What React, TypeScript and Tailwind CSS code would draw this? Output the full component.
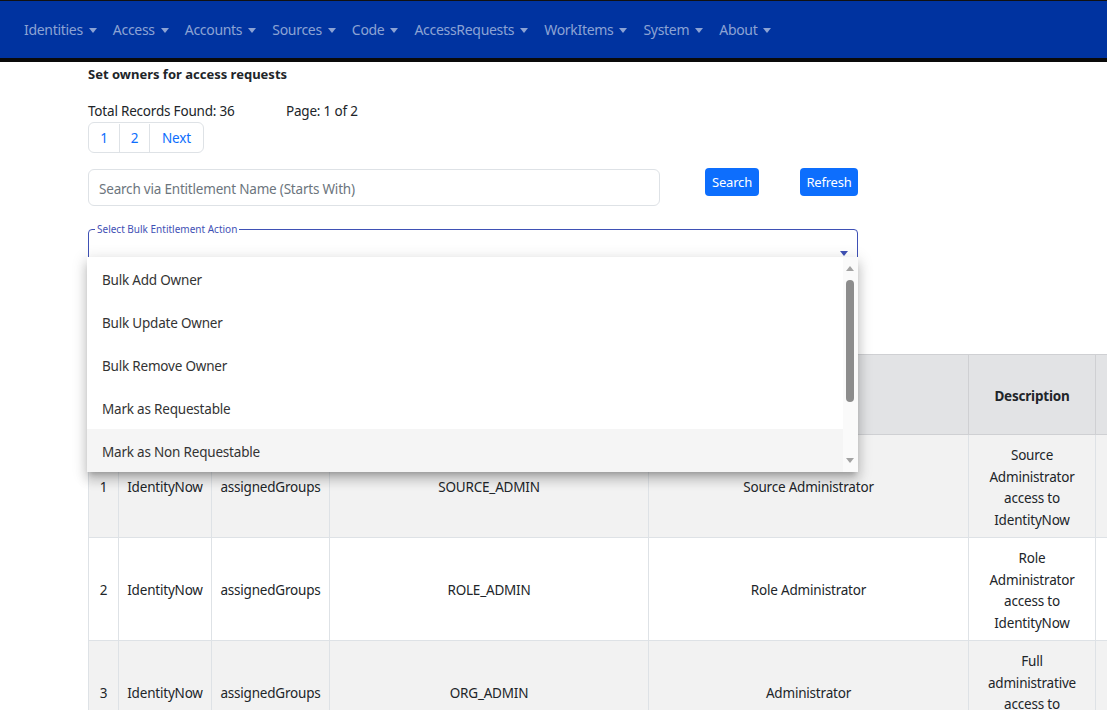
import React from "react";

const navItems = ["Identities", "Access", "Accounts", "Sources", "Code", "AccessRequests", "WorkItems", "System", "About"];

const menuItems = ["Bulk Add Owner", "Bulk Update Owner", "Bulk Remove Owner", "Mark as Requestable", "Mark as Non Requestable"];

const rows = [
  { n: 1, src: "IdentityNow", attr: "assignedGroups", value: "SOURCE_ADMIN", name: "Source Administrator", desc: "Source Administrator access to IdentityNow" },
  { n: 2, src: "IdentityNow", attr: "assignedGroups", value: "ROLE_ADMIN", name: "Role Administrator", desc: "Role Administrator access to IdentityNow" },
  { n: 3, src: "IdentityNow", attr: "assignedGroups", value: "ORG_ADMIN", name: "Administrator", desc: "Full administrative access to IdentityNow" },
];

function Caret({ className = "" }: { className?: string }) {
  return (
    <svg width="8" height="5" viewBox="0 0 8 5" className={className}>
      <path d="M0 0h8L4 5z" fill="currentColor" />
    </svg>
  );
}

export default function App() {
  return (
    <div className="h-[710px] w-[1107px] overflow-hidden bg-white font-['Noto_Sans',sans-serif] text-[#212529]">
      {/* top nav */}
      <nav className="flex h-[62px] items-center border-t border-t-[#111] border-b-4 border-b-[#0a0a0a] bg-[#0033a0] pl-4">
        {navItems.map((item) => (
          <div key={item} className="flex items-center px-2 text-[14px] tracking-[-0.3px] text-[#8ca3d4]">
            <span>{item}</span>
            <Caret className="ml-[6px] mt-[1px]" />
          </div>
        ))}
      </nav>

      <div className="pl-[88px] text-[13.5px] tracking-[-0.2px]">
        <div className="mt-[3px] text-[13px] font-bold leading-[18px] tracking-normal">Set owners for access requests</div>

        <div className="mt-[18px] flex leading-[21px]">
          <span className="w-[198px]">Total Records Found: 36</span>
          <span>Page: 1 of 2</span>
        </div>

        <div className="flex h-[31px] w-fit rounded-md border border-[#dee2e6] pt-[1px] text-[#0d6efd]">
          <div className="flex w-[30px] items-center justify-center">1</div>
          <div className="flex w-[30px] items-center justify-center border-l border-[#dee2e6]">2</div>
          <div className="flex items-center border-l border-[#dee2e6] px-3">Next</div>
        </div>

        <div className="mt-4 flex items-start">
          <div className="flex h-[37px] w-[572px] items-center rounded-md border border-[#dee2e6] px-[10px] pt-[3px] text-[#6c757d]">
            Search via Entitlement Name (Starts With)
          </div>
          <button className="ml-[45px] -mt-px h-[28px] w-[54px] rounded bg-[#0d6efd] pt-[1px] text-[13px] text-white">Search</button>
          <button className="ml-[41px] -mt-px h-[28px] w-[58px] rounded bg-[#0d6efd] pt-[1px] text-[13px] text-white">Refresh</button>
        </div>

        {/* select + open menu */}
        <div className="relative mt-[23px] h-[56px] w-[770px]">
          <fieldset className="absolute inset-x-0 bottom-0 top-[-6px] rounded border-[1.5px] border-[#3f51b5] px-[6px]">
            <legend className="px-[2px] text-[10px] leading-[12px] tracking-normal text-[#3f51b5]">Select Bulk Entitlement Action</legend>
          </fieldset>
          <Caret className="absolute right-[10px] top-[22px] text-[#3f51b5]" />

          <div className="absolute left-[-1px] top-[28px] z-10 flex h-[215px] w-[771px] bg-white shadow-[0px_5px_5px_-3px_rgba(0,0,0,0.2),0px_8px_10px_1px_rgba(0,0,0,0.14),0px_3px_14px_2px_rgba(0,0,0,0.12)]">
            <div className="flex-1">
              {menuItems.map((m, i) => (
                <div
                  key={m}
                  className={`flex h-[43px] items-center px-[15px] pt-[4px] text-[#333] ${i === 4 ? "bg-[#f5f5f5]" : ""}`}
                >
                  {m}
                </div>
              ))}
            </div>
            <div className="relative w-[15px] bg-[#fafafa]">
              <Caret className="absolute left-[3px] top-[9px] rotate-180 text-[#a3a3a3]" />
              <div className="absolute left-[3px] top-[23px] h-[122px] w-[8px] rounded-full bg-[#8c8c8c]" />
              <Caret className="absolute bottom-[9px] left-[3px] text-[#a3a3a3]" />
            </div>
          </div>
        </div>

        <table className="mt-[69px] w-[1140px] table-fixed border-collapse leading-[21.5px]">
          <colgroup>
            <col className="w-[30px]" />
            <col className="w-[93px]" />
            <col className="w-[118px]" />
            <col className="w-[319px]" />
            <col className="w-[320px]" />
            <col className="w-[127px]" />
            <col className="w-[133px]" />
          </colgroup>
          <thead>
            <tr className="h-[80px] bg-[#e2e3e5]">
              {["#", "Source Name", "Attribute Name", "Entitlement Value", "Display Name", "Description", "Owner"].map((h) => (
                <th key={h} className="border border-[#cfd0d3] px-2 pt-[4px] text-center font-bold">
                  {h}
                </th>
              ))}
            </tr>
          </thead>
          <tbody>
            {rows.map((r) => (
              <tr key={r.n} className={r.n % 2 === 1 ? "h-[102px] bg-[#f2f2f2]" : "h-[102px] bg-white"}>
                <td className="border border-[#dee2e6] px-2 pt-[3px] text-center">{r.n}</td>
                <td className="border border-[#dee2e6] px-2 pt-[3px] text-center">{r.src}</td>
                <td className="border border-[#dee2e6] px-2 pt-[3px] text-center">{r.attr}</td>
                <td className="border border-[#dee2e6] px-2 pt-[3px] text-center">{r.value}</td>
                <td className="border border-[#dee2e6] px-2 pt-[3px] text-center">{r.name}</td>
                <td className="border border-[#dee2e6] px-2 pb-[6px] pt-[10px] text-center">{r.desc}</td>
                <td className="border border-[#dee2e6] px-2 text-center"></td>
              </tr>
            ))}
          </tbody>
        </table>
      </div>
    </div>
  );
}
